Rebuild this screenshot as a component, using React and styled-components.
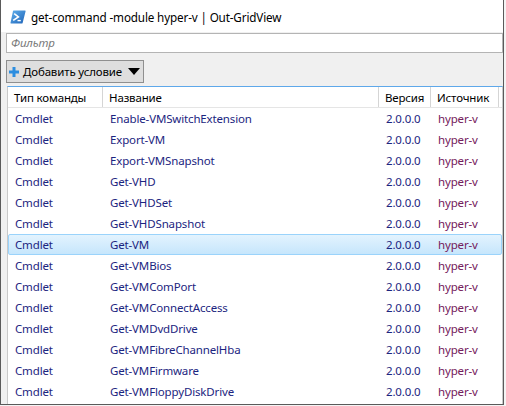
import React from 'react';
import styled, { createGlobalStyle } from 'styled-components';

const rows = [
  'Enable-VMSwitchExtension',
  'Export-VM',
  'Export-VMSnapshot',
  'Get-VHD',
  'Get-VHDSet',
  'Get-VHDSnapshot',
  'Get-VM',
  'Get-VMBios',
  'Get-VMComPort',
  'Get-VMConnectAccess',
  'Get-VMDvdDrive',
  'Get-VMFibreChannelHba',
  'Get-VMFirmware',
  'Get-VMFloppyDiskDrive',
];

const columns = [
  { title: 'Тип команды', width: 95 },
  { title: 'Название', width: 276 },
  { title: 'Версия', width: 52 },
  { title: 'Источник', width: 68 },
];

const PsIcon = () => (
  <svg width="16" height="16" viewBox="0 0 16 16">
    <defs>
      <linearGradient id="ps" x1="0" y1="0" x2="1" y2="1">
        <stop offset="0" stopColor="#5fb0ec" />
        <stop offset="1" stopColor="#1f63b8" />
      </linearGradient>
    </defs>
    <path d="M3.5 1.5 H15 Q15.8 1.5 15.6 2.3 L12.6 14 Q12.4 14.5 11.8 14.5 H1 Q0.3 14.5 0.5 13.8 L3 2 Q3.1 1.5 3.5 1.5 Z" fill="url(#ps)" />
    <path d="M4.2 4.6 L8.4 8 L3.2 11.4" stroke="#fff" strokeWidth="1.6" fill="none" />
    <path d="M7.5 11.6 H10.8" stroke="#fff" strokeWidth="1.4" />
  </svg>
);

const PlusIcon = () => (
  <svg width="10" height="10" viewBox="0 0 10 10">
    <path d="M3.5 0 H6.5 V3.5 H10 V6.5 H6.5 V10 H3.5 V6.5 H0 V3.5 H3.5 Z" fill="#2d8ee0" />
  </svg>
);

const App = () => (
  <>
    <GlobalStyle />
    <Window>
      <TitleBar>
        <PsIcon />
        <TitleText>get-command -module hyper-v | Out-GridView</TitleText>
      </TitleBar>
      <Client>
        <FilterBox>Фильтр</FilterBox>
        <AddButton>
          <PlusIcon />
          <span>Добавить условие</span>
          <Arrow />
        </AddButton>
        <Grid>
          <HeaderRow>
            {columns.map((c) => (
              <HeaderCell key={c.title} width={c.width}>{c.title}</HeaderCell>
            ))}
          </HeaderRow>
          {rows.map((name) => (
            <Row key={name} selected={name === 'Get-VM'}>
              <Cell width={95}>Cmdlet</Cell>
              <Cell width={276}>{name}</Cell>
              <Cell width={52}>2.0.0.0</Cell>
              <Cell width={68} source>hyper-v</Cell>
            </Row>
          ))}
        </Grid>
      </Client>
    </Window>
  </>
);

const GlobalStyle = createGlobalStyle`
  body {
    margin: 0;
    background: #f4f4f4;
    font-family: "Noto Sans", "Open Sans", sans-serif;
    font-size: 11.5px;
    letter-spacing: -0.15px;
  }
`;

const Window = styled.div`
  width: 504px;
  height: 405px;
  box-sizing: border-box;
  border-left: 1px solid #5a5a5a;
  border-right: 1px solid #5a5a5a;
  border-bottom: 1px solid #5a5a5a;
  background: #f0f0f0;
  overflow: hidden;
  display: flex;
  flex-direction: column;
`;

const TitleBar = styled.div`
  height: 32px;
  flex-shrink: 0;
  box-sizing: border-box;
  padding: 2px 0 0 9px;
  background: #ffffff;
  display: flex;
  align-items: center;
  gap: 5px;
`;

const TitleText = styled.span`
  color: #000;
  font-size: 11.7px;
`;

const Client = styled.div`
  flex: 1;
  display: flex;
  flex-direction: column;
  padding: 1px 0 0 5px;
  min-height: 0;
`;

const FilterBox = styled.div`
  height: 20px;
  box-sizing: border-box;
  border: 1px solid #b4b4b4;
  background: #ffffff;
  color: #7a7a7a;
  font-style: italic;
  line-height: 17px;
  padding-left: 4px;
`;

const AddButton = styled.div`
  margin-top: 7px;
  width: 138px;
  height: 23px;
  box-sizing: border-box;
  border: 1px solid #8f8f8f;
  background: #dedede;
  display: flex;
  align-items: center;
  padding-left: 2px;
  gap: 4px;
  color: #000;
  white-space: nowrap;
`;

const Arrow = styled.span`
  margin-left: auto;
  margin-right: 3px;
  width: 0;
  height: 0;
  border-left: 6px solid transparent;
  border-right: 6px solid transparent;
  border-top: 7px solid #000;
`;

const Grid = styled.div`
  margin: 3px 0 0 1px;
  flex: 1;
  background: #ffffff;
  border-top: 1px solid #5ea8ea;
  border-left: 1px solid #c9c9c9;
  border-right: 1px solid #c9c9c9;
`;

const HeaderRow = styled.div`
  display: flex;
  height: 20px;
  border-bottom: 1px solid #e5e5e5;
`;

const HeaderCell = styled.div`
  width: ${(p) => p.width}px;
  flex-shrink: 0;
  box-sizing: border-box;
  border-right: 1px solid #d5d5d5;
  padding-left: 6px;
  line-height: 22px;
  color: #000;
  white-space: nowrap;
`;

const Row = styled.div`
  display: flex;
  height: 21px;
  box-sizing: border-box;
  border: 1px solid ${(p) => (p.selected ? '#9ad3fb' : 'transparent')};
  border-radius: 2px;
  background: ${(p) => (p.selected ? 'linear-gradient(#e3f3fe, #c6e6fc)' : 'transparent')};
`;

const Cell = styled.div`
  width: ${(p) => p.width}px;
  flex-shrink: 0;
  box-sizing: border-box;
  padding-left: 6px;
  line-height: 20px;
  white-space: nowrap;
  color: ${(p) => (p.source ? '#74205c' : '#1c2580')};
`;

export default App;
